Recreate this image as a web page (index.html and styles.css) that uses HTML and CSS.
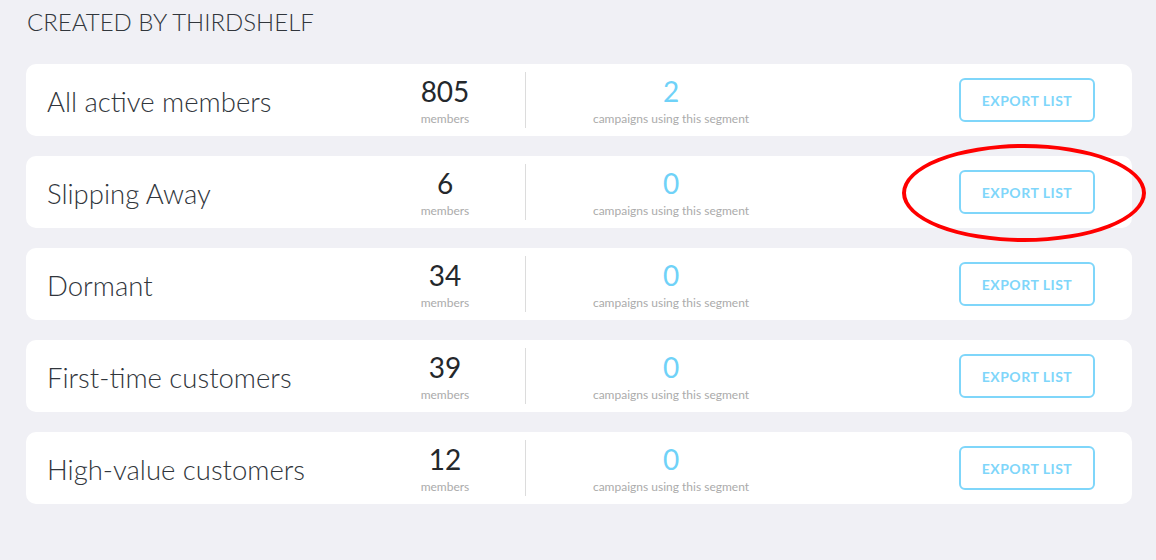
FILE: index.html
```
<!DOCTYPE html>
<html>
    <head>
        <title>Segments</title>
        <link rel="stylesheet" href="styles.css">
    </head>
    <body>
        <p class="section-title">Created by Thirdshelf</p>

        <div class="segment-list">
            <div class="segment">
                <p class="segment-name">All active members</p>
                <div class="stat">
                    <p class="stat-number">805</p>
                    <p class="stat-label">members</p>
                </div>
                <div class="divider"></div>
                <div class="stat">
                    <p class="stat-number campaigns">2</p>
                    <p class="stat-label">campaigns using this segment</p>
                </div>
                <button class="export-button">Export list</button>
            </div>

            <div class="segment">
                <p class="segment-name">Slipping Away</p>
                <div class="stat">
                    <p class="stat-number">6</p>
                    <p class="stat-label">members</p>
                </div>
                <div class="divider"></div>
                <div class="stat">
                    <p class="stat-number campaigns">0</p>
                    <p class="stat-label">campaigns using this segment</p>
                </div>
                <div class="button-wrap">
                    <button class="export-button">Export list</button>
                    <div class="highlight-ring"></div>
                </div>
            </div>

            <div class="segment">
                <p class="segment-name">Dormant</p>
                <div class="stat">
                    <p class="stat-number">34</p>
                    <p class="stat-label">members</p>
                </div>
                <div class="divider"></div>
                <div class="stat">
                    <p class="stat-number campaigns">0</p>
                    <p class="stat-label">campaigns using this segment</p>
                </div>
                <button class="export-button">Export list</button>
            </div>

            <div class="segment">
                <p class="segment-name">First-time customers</p>
                <div class="stat">
                    <p class="stat-number">39</p>
                    <p class="stat-label">members</p>
                </div>
                <div class="divider"></div>
                <div class="stat">
                    <p class="stat-number campaigns">0</p>
                    <p class="stat-label">campaigns using this segment</p>
                </div>
                <button class="export-button">Export list</button>
            </div>

            <div class="segment">
                <p class="segment-name">High-value customers</p>
                <div class="stat">
                    <p class="stat-number">12</p>
                    <p class="stat-label">members</p>
                </div>
                <div class="divider"></div>
                <div class="stat">
                    <p class="stat-number campaigns">0</p>
                    <p class="stat-label">campaigns using this segment</p>
                </div>
                <button class="export-button">Export list</button>
            </div>
        </div>
    </body>
</html>
```

FILE: styles.css
```
body{
    background-color: #f0f0f5;
    color: #31363c;
    font-family: "Lato Light", Lato, "Open Sans", sans-serif;
    margin: 0;
    padding: 0 24px 0 26px;
}

p{
    margin: 0;
}

.section-title{
    font-size: 24px;
    font-weight: 300;
    line-height: 28px;
    text-transform: uppercase;
    padding: 8px 0 0 1px;
    height: 64px;
    box-sizing: border-box;
}

.segment-list{
    display: flex;
    flex-direction: column;
    gap: 20px;
}

.segment{
    display: grid;
    grid-template-columns: 318px 160px 1px 290px 1fr 136px;
    align-items: center;
    height: 72px;
    padding: 0 37px 0 21px;
    background-color: white;
    border-radius: 10px;
}

.segment-name{
    font-size: 27.5px;
    font-weight: 300;
    padding-top: 2px;
}

.stat{
    text-align: center;
    font-family: Lato, sans-serif;
}

.stat-number{
    font-size: 28px;
    line-height: 34px;
    color: #24282c;
}

.campaigns{
    color: #6fd2f8;
}

.stat-label{
    font-size: 12px;
    line-height: 14px;
    margin-top: 4px;
    color: #ababab;
}

.divider{
    height: 56px;
    background-color: #dcdcdc;
}

.export-button,
.button-wrap{
    grid-column: 6;
}

.button-wrap{
    position: relative;
}

.export-button{
    width: 136px;
    height: 44px;
    background-color: white;
    border: 2px solid #7fd6fa;
    border-radius: 6px;
    color: #7fd6fa;
    font-family: Lato, sans-serif;
    font-size: 14px;
    font-weight: bold;
    letter-spacing: 0.5px;
    text-transform: uppercase;
    cursor: pointer;
}

.highlight-ring{
    position: absolute;
    left: -57px;
    top: -26px;
    width: 244px;
    height: 98px;
    border: 4px solid #ff0000;
    border-radius: 50%;
    box-sizing: border-box;
    pointer-events: none;
}
```
